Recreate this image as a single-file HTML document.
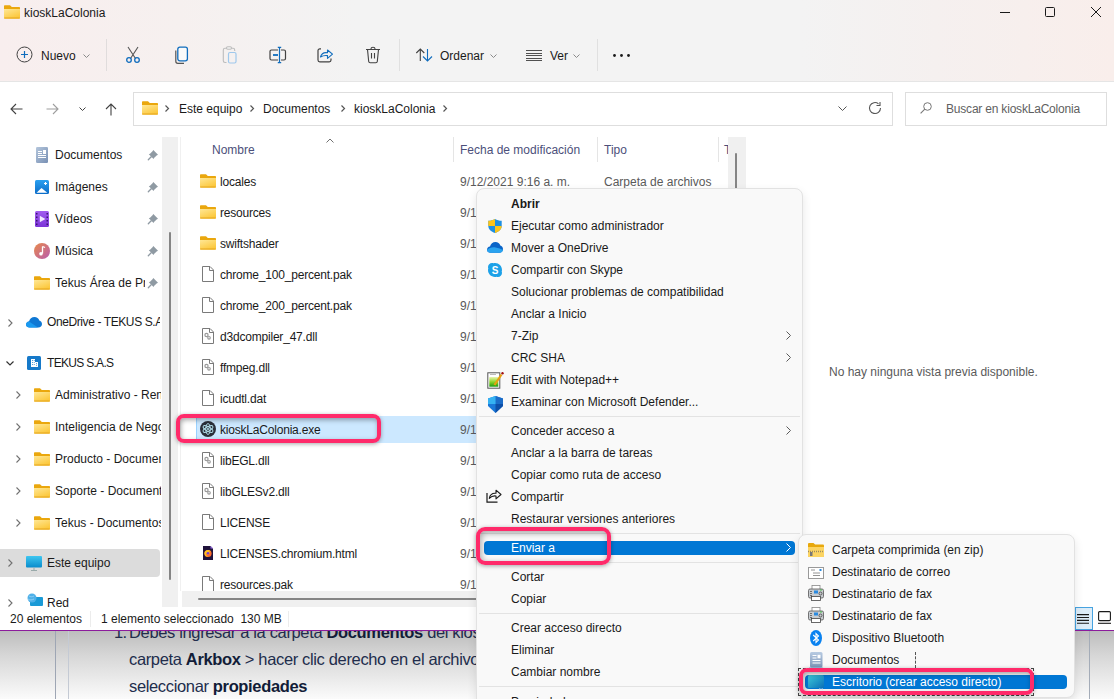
<!DOCTYPE html>
<html><head><meta charset="utf-8">
<style>
*{box-sizing:border-box;margin:0;padding:0}
html,body{width:1114px;height:699px;overflow:hidden;background:#fff;font-family:"Liberation Sans",sans-serif;font-size:12px;color:#1a1a1a}
.a{position:absolute}
.t{position:absolute;white-space:nowrap;line-height:16px;font-size:12px}
svg{position:absolute;overflow:visible}
#top{left:0;top:0;width:1114px;height:82px;background:linear-gradient(90deg,#f8eeee 0%,#f6f0ef 16%,#f3f3f3 32%,#f3f3f3 72%,#f5f0ef 84%,#f9eeeb 100%);border-bottom:1px solid #e5e5e5}
.ic{stroke:#424242;fill:none;stroke-width:1}
.bl{stroke:#0f6cbd}
</style></head><body>
<svg width="0" height="0" style="position:absolute"><defs><linearGradient id="gfold" x1="0" y1="0" x2=".6" y2="1"><stop offset="0" stop-color="#ffe795"/><stop offset="1" stop-color="#fcc83c"/></linearGradient></defs></svg>
<!-- ===== TOP ===== -->
<div id="top" class="a"></div>
<svg style="left:4px;top:5px" width="16" height="14" viewBox="0 0 16 13.5"><path d="M0 1C0 .4.4 0 1 0h5l1.8 1.8H15c.6 0 1 .4 1 1v9.4c0 .6-.4 1-1 1H1c-.6 0-1-.4-1-1z" fill="#eaa70d"/><path d="M0 3.8h16v8.4c0 .6-.4 1-1 1H1c-.6 0-1-.4-1-1z" fill="url(#gfold)"/><path d="M.3 12.7h15.4" stroke="#e3a21c" stroke-width=".8"/></svg>
<div class="t" style="left:24px;top:5px;color:#1a1a1a">kioskLaColonia</div>
<!-- window controls -->
<svg style="left:1000px;top:12px" width="10" height="1"><rect width="10" height="1" fill="#1a1a1a"/></svg>
<svg style="left:1045px;top:7px" width="10" height="10" viewBox="0 0 10 10"><rect x=".5" y=".5" width="9" height="9" rx="1" fill="none" stroke="#1a1a1a"/></svg>
<svg style="left:1091px;top:7px" width="10" height="10" viewBox="0 0 10 10"><path d="M0 0L10 10M10 0L0 10" stroke="#1a1a1a" stroke-width="1"/></svg>
<!-- toolbar -->
<svg style="left:16px;top:46px" width="17" height="17" viewBox="0 0 17 17"><circle cx="8.5" cy="8.5" r="7.5" fill="none" stroke="#424242"/><path d="M8.5 5v7M5 8.5h7" stroke="#0f6cbd" stroke-width="1.2"/></svg>
<div class="t" style="left:41px;top:48px">Nuevo</div>
<svg style="left:83px;top:54px" width="7" height="4" viewBox="0 0 7 4"><path d="M.5 .5l3 3 3-3" fill="none" stroke="#8a8a8a"/></svg>
<div class="a" style="left:106px;top:39px;width:1px;height:32px;background:#e0dcdc"></div>
<!-- cut -->
<svg style="left:125px;top:46px" width="16" height="17" viewBox="0 0 16 17"><path d="M3 1l7.5 11.5M13 1L5.5 12.5" stroke="#555" stroke-width="1.1" fill="none"/><circle cx="4" cy="14" r="2.3" fill="none" stroke="#0f6cbd" stroke-width="1.3"/><circle cx="12" cy="14" r="2.3" fill="none" stroke="#0f6cbd" stroke-width="1.3"/></svg>
<!-- copy -->
<svg style="left:174px;top:46px" width="16" height="18" viewBox="0 0 16 18"><path d="M1.8 4.5v10.8c0 1.2 1 2 2 2h6.2" fill="none" stroke="#555" stroke-width="1.2"/><rect x="3.8" y="1.2" width="9.6" height="13.6" rx="2" fill="#fafafa" stroke="#0f6cbd" stroke-width="1.3"/></svg>
<!-- paste (disabled) -->
<svg style="left:222px;top:46px" width="16" height="18" viewBox="0 0 16 18"><path d="M4.5 16.5H3c-1 0-1.7-.7-1.7-1.7V4c0-1 .7-1.7 1.7-1.7h8c1 0 1.7.7 1.7 1.7v1" fill="none" stroke="#bdbdbd" stroke-width="1.1"/><rect x="4.5" y=".8" width="5" height="2.5" rx="1.2" fill="#f3f3f3" stroke="#bdbdbd" stroke-width="1.1"/><rect x="6.5" y="6.5" width="7.5" height="10.5" rx="1.5" fill="none" stroke="#9fc8ec" stroke-width="1.2"/></svg>
<!-- rename -->
<svg style="left:269px;top:46px" width="18" height="18" viewBox="0 0 18 18"><path d="M9 4H2.5C1.6 4 1 4.6 1 5.5v7c0 .9.6 1.5 1.5 1.5H9M12 4h3c.9 0 1.5.6 1.5 1.5v7c0 .9-.6 1.5-1.5 1.5h-3" fill="none" stroke="#424242" stroke-width="1.2"/><path d="M4 9h5" stroke="#0f6cbd" stroke-width="1.8"/><path d="M10.5 1.5v15M8.8 1.3h3.4M8.8 16.7h3.4" stroke="#0f6cbd" stroke-width="1.2"/></svg>
<!-- share -->
<svg style="left:317px;top:47px" width="17" height="16" viewBox="0 0 17 16"><path d="M4 1.8H2.8C1.8 1.8 1 2.6 1 3.6v9.4c0 1 .8 1.8 1.8 1.8h9.4c1 0 1.8-.8 1.8-1.8v-1.5" fill="none" stroke="#424242" stroke-width="1.2"/><path d="M3.5 10C4.5 6.5 7 5.2 10.5 5.8V3l5 4.2-5 4.2V8.6C7.5 8.2 5.5 8.8 3.5 10z" fill="none" stroke="#0f6cbd" stroke-width="1.1" stroke-linejoin="round"/></svg>
<!-- trash -->
<svg style="left:365px;top:46px" width="16" height="18" viewBox="0 0 16 18"><path d="M1 3.5h14M6 3.5V2.8C6 2 6.8 1.3 8 1.3S10 2 10 2.8v.7M2.5 3.5l1.2 12c.1.8.7 1.3 1.5 1.3h5.6c.8 0 1.4-.5 1.5-1.3l1.2-12M6.5 7v5.5M9.5 7v5.5" fill="none" stroke="#424242" stroke-width="1.1"/></svg>
<div class="a" style="left:399px;top:39px;width:1px;height:32px;background:#e0e0e0"></div>
<!-- ordenar -->
<svg style="left:416px;top:48px" width="17" height="14" viewBox="0 0 17 14"><path d="M4.3 13V1M.3 5L4.3 1l4 4" fill="none" stroke="#424242" stroke-width="1.1"/><path d="M11.5 1v12M7 8.5l4.5 4.5 4.5-4.5" fill="none" stroke="#0f6cbd" stroke-width="1.1"/></svg>
<div class="t" style="left:440px;top:48px">Ordenar</div>
<svg style="left:490px;top:54px" width="7" height="4" viewBox="0 0 7 4"><path d="M.5 .5l3 3 3-3" fill="none" stroke="#8a8a8a"/></svg>
<svg style="left:526px;top:50px" width="16" height="11" viewBox="0 0 16 11"><path d="M0 0h16v1H0zM0 3h16v1H0zM0 5h16v1H0zM0 8h16v1H0zM0 10h16v1H0z" fill="#505050"/></svg>
<div class="t" style="left:550px;top:48px">Ver</div>
<svg style="left:573px;top:54px" width="7" height="4" viewBox="0 0 7 4"><path d="M.5 .5l3 3 3-3" fill="none" stroke="#8a8a8a"/></svg>
<div class="a" style="left:597px;top:39px;width:1px;height:32px;background:#e0e0e0"></div>
<svg style="left:613px;top:54px" width="17" height="3" viewBox="0 0 17 3"><circle cx="1.5" cy="1.5" r="1.4" fill="#1a1a1a"/><circle cx="8.5" cy="1.5" r="1.4" fill="#1a1a1a"/><circle cx="15.5" cy="1.5" r="1.4" fill="#1a1a1a"/></svg>

<!-- ===== ADDRESS ROW ===== -->
<svg style="left:10px;top:103px" width="13" height="12" viewBox="0 0 13 12"><path d="M12.5 6H1M6 1L1 6l5 5" fill="none" stroke="#424242" stroke-width="1.1"/></svg>
<svg style="left:46px;top:103px" width="13" height="12" viewBox="0 0 13 12"><path d="M.5 6H12M7 1l5 5-5 5" fill="none" stroke="#9e9e9e" stroke-width="1.1"/></svg>
<svg style="left:79px;top:107px" width="7" height="4" viewBox="0 0 7 4"><path d="M.5 .5l3 3 3-3" fill="none" stroke="#424242"/></svg>
<svg style="left:105px;top:103px" width="12" height="13" viewBox="0 0 12 13"><path d="M6 12.5V1M1 6l5-5 5 5" fill="none" stroke="#424242" stroke-width="1.1"/></svg>
<div class="a" style="left:133px;top:92px;width:760px;height:34px;border:1px solid #dedede;background:#fff"></div>
<svg style="left:142px;top:101px" width="16" height="14" viewBox="0 0 16 13.5"><path d="M0 1C0 .4.4 0 1 0h5l1.8 1.8H15c.6 0 1 .4 1 1v9.4c0 .6-.4 1-1 1H1c-.6 0-1-.4-1-1z" fill="#eaa70d"/><path d="M0 3.8h16v8.4c0 .6-.4 1-1 1H1c-.6 0-1-.4-1-1z" fill="url(#gfold)"/><path d="M.3 12.7h15.4" stroke="#e3a21c" stroke-width=".8"/></svg>
<svg style="left:165px;top:105px" width="4" height="7" viewBox="0 0 4 7"><path d="M.5.5l3 3-3 3" fill="none" stroke="#555" stroke-width="1.2"/></svg>
<div class="t" style="left:179px;top:101px">Este equipo</div>
<svg style="left:250px;top:105px" width="4" height="7" viewBox="0 0 4 7"><path d="M.5.5l3 3-3 3" fill="none" stroke="#555" stroke-width="1.2"/></svg>
<div class="t" style="left:263px;top:101px">Documentos</div>
<svg style="left:341px;top:105px" width="4" height="7" viewBox="0 0 4 7"><path d="M.5.5l3 3-3 3" fill="none" stroke="#555" stroke-width="1.2"/></svg>
<div class="t" style="left:354px;top:101px">kioskLaColonia</div>
<svg style="left:443px;top:105px" width="4" height="7" viewBox="0 0 4 7"><path d="M.5.5l3 3-3 3" fill="none" stroke="#555" stroke-width="1.2"/></svg>
<svg style="left:838px;top:106px" width="9" height="5" viewBox="0 0 9 5"><path d="M.5.5l4 4 4-4" fill="none" stroke="#555"/></svg>
<svg style="left:868px;top:101px" width="14" height="14" viewBox="0 0 14 14"><path d="M12.5 7A5.5 5.5 0 1 1 10.5 2.8M12 1v3.5H8.5" fill="none" stroke="#555" stroke-width="1.1"/></svg>
<div class="a" style="left:905px;top:92px;width:202px;height:34px;border:1px solid #dedede;background:#fff"></div>
<svg style="left:920px;top:102px" width="12" height="12" viewBox="0 0 12 12"><circle cx="7.5" cy="4.5" r="3.8" fill="none" stroke="#777"/><path d="M4.8 7.2L.6 11.4" stroke="#777" stroke-width="1.1"/></svg>
<div class="t" style="left:946px;top:101px;color:#5f5f5f;letter-spacing:-0.2px">Buscar en kioskLaColonia</div>
<!-- ===== NAV PANE ===== -->
<div class="a" style="left:162px;top:137px;width:16px;height:470px;background:#f0f0f0"></div><div class="a" style="left:180px;top:137px;width:1px;height:470px;background:#f0f0f0"></div>
<div class="a" style="left:169px;top:232px;width:2px;height:348px;background:#858585;border-radius:1px"></div>
<!-- pinned -->
<svg style="left:36px;top:147px" width="12" height="16" viewBox="0 0 12 16"><defs><linearGradient id="gd" x1="0" y1="0" x2="1" y2="1"><stop offset="0" stop-color="#b4c6dc"/><stop offset="1" stop-color="#7890b4"/></linearGradient></defs><rect width="12" height="16" rx="1.2" fill="url(#gd)"/><path d="M2 4h4v1H2zM2 6h4v1H2zM2 8h8v1H2zM2 10h8v1H2z" fill="#fff"/><rect x="7" y="3" width="3" height="4" fill="#fff"/></svg>
<div class="t" style="left:55px;top:147px">Documentos</div>
<svg style="left:35px;top:180px" width="14" height="14" viewBox="0 0 14 14"><defs><linearGradient id="gim" x1="0" y1="0" x2="0" y2="1"><stop offset="0" stop-color="#2aa0f0"/><stop offset="1" stop-color="#0b6cc8"/></linearGradient></defs><rect width="14" height="14" rx="1.5" fill="url(#gim)"/><path d="M1.5 12.8L6.5 8l5.8 4.8z" fill="#fff"/><path d="M10.5 2v3M9 3.5h3" stroke="#fff" stroke-width="1.1"/></svg>
<div class="t" style="left:55px;top:179px">Imágenes</div>
<svg style="left:35px;top:211px" width="14" height="16" viewBox="0 0 14 16"><defs><linearGradient id="gvd" x1="0" y1="0" x2="0" y2="1"><stop offset="0" stop-color="#a25cf0"/><stop offset="1" stop-color="#7c34d8"/></linearGradient></defs><rect width="14" height="16" rx="1.5" fill="url(#gvd)"/><path d="M4.8 4.8v6.4l5.6-3.2z" fill="#f0e8ff"/><path d="M1 2h1.5v1.5H1zM1 5.5h1.5V7H1zM1 9h1.5v1.5H1zM1 12.5h1.5V14H1zM11.5 2H13v1.5h-1.5zM11.5 5.5H13V7h-1.5zM11.5 9H13v1.5h-1.5zM11.5 12.5H13V14h-1.5z" fill="#3a1470"/></svg>
<div class="t" style="left:55px;top:211px">Vídeos</div>
<svg style="left:34px;top:243px" width="16" height="16" viewBox="0 0 16 16"><defs><linearGradient id="gm" x1="0" y1="0" x2="1" y2="1"><stop offset="0" stop-color="#e88a4a"/><stop offset="1" stop-color="#b85cb0"/></linearGradient></defs><circle cx="8" cy="8" r="8" fill="url(#gm)"/><path d="M8.5 3.5v7" stroke="#fff" stroke-width="1.3"/><circle cx="7" cy="10.8" r="1.8" fill="#fff"/><path d="M8.5 3.5l2.5 1" stroke="#fff" stroke-width="1.2"/></svg>
<div class="t" style="left:55px;top:243px">Música</div>
<svg style="left:34px;top:276px" width="16" height="14" viewBox="0 0 16 13.5"><path d="M0 1C0 .4.4 0 1 0h5l1.8 1.8H15c.6 0 1 .4 1 1v9.4c0 .6-.4 1-1 1H1c-.6 0-1-.4-1-1z" fill="#eaa70d"/><path d="M0 3.8h16v8.4c0 .6-.4 1-1 1H1c-.6 0-1-.4-1-1z" fill="url(#gfold)"/><path d="M.3 12.7h15.4" stroke="#e3a21c" stroke-width=".8"/></svg>
<div class="a" style="left:55px;top:275px;width:90px;height:16px;overflow:hidden"><div class="t" style="left:0;top:0">Tekus Área de Producto</div></div>
<!-- pins -->
<svg style="left:148px;top:150px" width="10" height="10" viewBox="0 0 10 10"><path d="M5.3 0L10 4.7 8.6 5.4 6 8l-.4 1L.8 4.3 2 3.7 4.5 1.3z" fill="#8f9aa3"/><path d="M3.2 6.8L.3 9.7" stroke="#8f9aa3" stroke-width="1.3" stroke-linecap="round"/></svg>
<svg style="left:148px;top:182px" width="10" height="10" viewBox="0 0 10 10"><path d="M5.3 0L10 4.7 8.6 5.4 6 8l-.4 1L.8 4.3 2 3.7 4.5 1.3z" fill="#8f9aa3"/><path d="M3.2 6.8L.3 9.7" stroke="#8f9aa3" stroke-width="1.3" stroke-linecap="round"/></svg>
<svg style="left:148px;top:214px" width="10" height="10" viewBox="0 0 10 10"><path d="M5.3 0L10 4.7 8.6 5.4 6 8l-.4 1L.8 4.3 2 3.7 4.5 1.3z" fill="#8f9aa3"/><path d="M3.2 6.8L.3 9.7" stroke="#8f9aa3" stroke-width="1.3" stroke-linecap="round"/></svg>
<svg style="left:148px;top:246px" width="10" height="10" viewBox="0 0 10 10"><path d="M5.3 0L10 4.7 8.6 5.4 6 8l-.4 1L.8 4.3 2 3.7 4.5 1.3z" fill="#8f9aa3"/><path d="M3.2 6.8L.3 9.7" stroke="#8f9aa3" stroke-width="1.3" stroke-linecap="round"/></svg>
<svg style="left:148px;top:278px" width="10" height="10" viewBox="0 0 10 10"><path d="M5.3 0L10 4.7 8.6 5.4 6 8l-.4 1L.8 4.3 2 3.7 4.5 1.3z" fill="#8f9aa3"/><path d="M3.2 6.8L.3 9.7" stroke="#8f9aa3" stroke-width="1.3" stroke-linecap="round"/></svg>
<!-- OneDrive -->
<svg style="left:8px;top:319px" width="5" height="8" viewBox="0 0 5 8"><path d="M.5.5L4 4 .5 7.5" fill="none" stroke="#707070" stroke-width="1.1"/></svg>
<svg style="left:26px;top:317px" width="16" height="11" viewBox="0 0 16 11"><path d="M3.5 10.5C1.6 10.5 0 9.2 0 7.5c0-1.6 1.3-2.8 3-3C3.5 2 5.8 0 8.5 0c2.3 0 4.2 1.4 4.8 3.5 1.5.3 2.7 1.6 2.7 3.4 0 2-1.6 3.6-3.6 3.6z" fill="#0f78d4"/><path d="M3.5 10.5C1.6 10.5 0 9.2 0 7.5c0-1.6 1.3-2.8 3-3L12 10.5z" fill="#1a9af0"/></svg>
<div class="a" style="left:47px;top:314px;width:113px;height:16px;overflow:hidden"><div class="t" style="left:0;top:0;letter-spacing:-0.4px">OneDrive - TEKUS S.A.S</div></div>
<!-- TEKUS -->
<svg style="left:6px;top:361px" width="8" height="5" viewBox="0 0 8 5"><path d="M.5.5L4 4 7.5.5" fill="none" stroke="#333" stroke-width="1.2"/></svg>
<svg style="left:27px;top:356px" width="14" height="14" viewBox="0 0 14 14"><rect width="14" height="14" rx="1.5" fill="#1679c9"/><path d="M4 3h4v8H4zM8 6h3v5H8z" fill="#fff"/><path d="M5 4.5h.8M6.8 4.5h.8M5 6.5h.8M6.8 6.5h.8M5 8.5h.8M6.8 8.5h.8M9 7.5h.8M9 9.3h.8" stroke="#1679c9" stroke-width=".9"/></svg>
<div class="t" style="left:47px;top:355px;letter-spacing:-0.7px">TEKUS S.A.S</div>
<svg style="left:16px;top:391px" width="5" height="8" viewBox="0 0 5 8"><path d="M.5.5L4 4 .5 7.5" fill="none" stroke="#707070" stroke-width="1.1"/></svg>
<svg style="left:34px;top:388px" width="16" height="14" viewBox="0 0 16 13.5"><path d="M0 1C0 .4.4 0 1 0h5l1.8 1.8H15c.6 0 1 .4 1 1v9.4c0 .6-.4 1-1 1H1c-.6 0-1-.4-1-1z" fill="#eaa70d"/><path d="M0 3.8h16v8.4c0 .6-.4 1-1 1H1c-.6 0-1-.4-1-1z" fill="url(#gfold)"/><path d="M.3 12.7h15.4" stroke="#e3a21c" stroke-width=".8"/></svg>
<div class="a" style="left:55px;top:387px;width:106px;height:16px;overflow:hidden"><div class="t" style="left:0;top:0">Administrativo - Rendición</div></div>
<svg style="left:16px;top:423px" width="5" height="8" viewBox="0 0 5 8"><path d="M.5.5L4 4 .5 7.5" fill="none" stroke="#707070" stroke-width="1.1"/></svg>
<svg style="left:34px;top:420px" width="16" height="14" viewBox="0 0 16 13.5"><path d="M0 1C0 .4.4 0 1 0h5l1.8 1.8H15c.6 0 1 .4 1 1v9.4c0 .6-.4 1-1 1H1c-.6 0-1-.4-1-1z" fill="#eaa70d"/><path d="M0 3.8h16v8.4c0 .6-.4 1-1 1H1c-.6 0-1-.4-1-1z" fill="url(#gfold)"/><path d="M.3 12.7h15.4" stroke="#e3a21c" stroke-width=".8"/></svg>
<div class="a" style="left:55px;top:419px;width:106px;height:16px;overflow:hidden"><div class="t" style="left:0;top:0">Inteligencia de Negocios</div></div>
<svg style="left:16px;top:455px" width="5" height="8" viewBox="0 0 5 8"><path d="M.5.5L4 4 .5 7.5" fill="none" stroke="#707070" stroke-width="1.1"/></svg>
<svg style="left:34px;top:452px" width="16" height="14" viewBox="0 0 16 13.5"><path d="M0 1C0 .4.4 0 1 0h5l1.8 1.8H15c.6 0 1 .4 1 1v9.4c0 .6-.4 1-1 1H1c-.6 0-1-.4-1-1z" fill="#eaa70d"/><path d="M0 3.8h16v8.4c0 .6-.4 1-1 1H1c-.6 0-1-.4-1-1z" fill="url(#gfold)"/><path d="M.3 12.7h15.4" stroke="#e3a21c" stroke-width=".8"/></svg>
<div class="a" style="left:55px;top:451px;width:106px;height:16px;overflow:hidden"><div class="t" style="left:0;top:0">Producto - Documentos</div></div>
<svg style="left:16px;top:487px" width="5" height="8" viewBox="0 0 5 8"><path d="M.5.5L4 4 .5 7.5" fill="none" stroke="#707070" stroke-width="1.1"/></svg>
<svg style="left:34px;top:484px" width="16" height="14" viewBox="0 0 16 13.5"><path d="M0 1C0 .4.4 0 1 0h5l1.8 1.8H15c.6 0 1 .4 1 1v9.4c0 .6-.4 1-1 1H1c-.6 0-1-.4-1-1z" fill="#eaa70d"/><path d="M0 3.8h16v8.4c0 .6-.4 1-1 1H1c-.6 0-1-.4-1-1z" fill="url(#gfold)"/><path d="M.3 12.7h15.4" stroke="#e3a21c" stroke-width=".8"/></svg>
<div class="a" style="left:55px;top:483px;width:106px;height:16px;overflow:hidden"><div class="t" style="left:0;top:0">Soporte - Documentos</div></div>
<svg style="left:16px;top:519px" width="5" height="8" viewBox="0 0 5 8"><path d="M.5.5L4 4 .5 7.5" fill="none" stroke="#707070" stroke-width="1.1"/></svg>
<svg style="left:34px;top:516px" width="16" height="14" viewBox="0 0 16 13.5"><path d="M0 1C0 .4.4 0 1 0h5l1.8 1.8H15c.6 0 1 .4 1 1v9.4c0 .6-.4 1-1 1H1c-.6 0-1-.4-1-1z" fill="#eaa70d"/><path d="M0 3.8h16v8.4c0 .6-.4 1-1 1H1c-.6 0-1-.4-1-1z" fill="url(#gfold)"/><path d="M.3 12.7h15.4" stroke="#e3a21c" stroke-width=".8"/></svg>
<div class="a" style="left:55px;top:515px;width:106px;height:16px;overflow:hidden"><div class="t" style="left:0;top:0">Tekus - Documentos</div></div>
<!-- Este equipo -->
<div class="a" style="left:0;top:549px;width:160px;height:28px;background:#dcdcdc;border-radius:0 4px 4px 0"></div>
<svg style="left:8px;top:559px" width="5" height="8" viewBox="0 0 5 8"><path d="M.5.5L4 4 .5 7.5" fill="none" stroke="#707070" stroke-width="1.1"/></svg>
<svg style="left:26px;top:556px" width="16" height="15" viewBox="0 0 16 15"><defs><linearGradient id="gp" x1="0" y1="0" x2="0" y2="1"><stop offset="0" stop-color="#3ec6f0"/><stop offset="1" stop-color="#0a8ccc"/></linearGradient></defs><rect x="0" y="0" width="16" height="11.5" rx="1" fill="url(#gp)"/><path d="M8 11.5v2.5M5 14.5h6" stroke="#9aa" stroke-width="1"/></svg>
<div class="t" style="left:47px;top:555px">Este equipo</div>
<!-- Red -->
<svg style="left:8px;top:599px" width="5" height="8" viewBox="0 0 5 8"><path d="M.5.5L4 4 .5 7.5" fill="none" stroke="#707070" stroke-width="1.1"/></svg>
<svg style="left:27px;top:593px" width="16" height="14" viewBox="0 0 16 14"><rect x="3" y="4" width="13" height="9" rx="1" fill="#1a9ad6"/><circle cx="5" cy="5" r="4.5" fill="#4fb0e8"/><path d="M2 3c1.5 1 3 1 5 0M1 6c2 1.5 4 1 6 0" stroke="#9dd5f5" stroke-width=".8" fill="none"/></svg>
<div class="t" style="left:47px;top:595px">Red</div>
<!-- ===== FILE LIST ===== -->
<div class="a" style="left:176px;top:137px;width:569px;height:470px;overflow:hidden">
<div class="t" style="left:36px;top:5px;color:#4c4f7a">Nombre</div>
<svg style="left:150px;top:1px" width="8" height="5" viewBox="0 0 8 5"><path d="M.5 4.5L4 1l3.5 3.5" fill="none" stroke="#707070" stroke-width="1"/></svg>
<div class="a" style="left:277px;top:0;width:1px;height:25px;background:#e5e5e5"></div>
<div class="t" style="left:284px;top:5px;color:#4c4f7a">Fecha de modificación</div>
<div class="a" style="left:421px;top:0;width:1px;height:25px;background:#e5e5e5"></div>
<div class="t" style="left:428px;top:5px;color:#4c4f7a">Tipo</div>
<div class="a" style="left:542px;top:0;width:1px;height:25px;background:#e5e5e5"></div>
<div class="t" style="left:548px;top:5px;color:#4c4f7a">Tamaño</div>
<div class="a" style="left:20px;top:279px;width:560px;height:27px;background:#cce8ff;border-left:1px solid #99d1ff"></div>
<svg style="left:24px;top:37px" width="16" height="14" viewBox="0 0 16 13.5"><path d="M0 1C0 .4.4 0 1 0h5l1.8 1.8H15c.6 0 1 .4 1 1v9.4c0 .6-.4 1-1 1H1c-.6 0-1-.4-1-1z" fill="#eaa70d"/><path d="M0 3.8h16v8.4c0 .6-.4 1-1 1H1c-.6 0-1-.4-1-1z" fill="url(#gfold)"/><path d="M.3 12.7h15.4" stroke="#e3a21c" stroke-width=".8"/></svg>
<div class="t" style="left:44px;top:36.6px;color:#1a1a1a;letter-spacing:-0.2px">locales</div>
<div class="t" style="left:284px;top:36.6px;color:#5a5a5a">9/12/2021 9:16 a. m.</div>
<div class="t" style="left:428px;top:36.6px;color:#5a5a5a">Carpeta de archivos</div>
<svg style="left:24px;top:68px" width="16" height="14" viewBox="0 0 16 13.5"><path d="M0 1C0 .4.4 0 1 0h5l1.8 1.8H15c.6 0 1 .4 1 1v9.4c0 .6-.4 1-1 1H1c-.6 0-1-.4-1-1z" fill="#eaa70d"/><path d="M0 3.8h16v8.4c0 .6-.4 1-1 1H1c-.6 0-1-.4-1-1z" fill="url(#gfold)"/><path d="M.3 12.7h15.4" stroke="#e3a21c" stroke-width=".8"/></svg>
<div class="t" style="left:44px;top:67.6px;color:#1a1a1a;letter-spacing:-0.2px">resources</div>
<div class="t" style="left:284px;top:67.6px;color:#5a5a5a">9/12/2021 9:16 a. m.</div>
<div class="t" style="left:428px;top:67.6px;color:#5a5a5a">Carpeta de archivos</div>
<svg style="left:24px;top:99px" width="16" height="14" viewBox="0 0 16 13.5"><path d="M0 1C0 .4.4 0 1 0h5l1.8 1.8H15c.6 0 1 .4 1 1v9.4c0 .6-.4 1-1 1H1c-.6 0-1-.4-1-1z" fill="#eaa70d"/><path d="M0 3.8h16v8.4c0 .6-.4 1-1 1H1c-.6 0-1-.4-1-1z" fill="url(#gfold)"/><path d="M.3 12.7h15.4" stroke="#e3a21c" stroke-width=".8"/></svg>
<div class="t" style="left:44px;top:98.6px;color:#1a1a1a;letter-spacing:-0.2px">swiftshader</div>
<div class="t" style="left:284px;top:98.6px;color:#5a5a5a">9/12/2021 9:16 a. m.</div>
<div class="t" style="left:428px;top:98.6px;color:#5a5a5a">Carpeta de archivos</div>
<svg style="left:26px;top:129px" width="12" height="16" viewBox="0 0 12 16"><path d="M.5.5h7.5l3.5 3.5v11.5H.5z" fill="#fff" stroke="#7a7a7a"/><path d="M7.5.5v4h4" fill="none" stroke="#7a7a7a"/></svg>
<div class="t" style="left:44px;top:129.6px;color:#1a1a1a;letter-spacing:-0.2px">chrome_100_percent.pak</div>
<div class="t" style="left:284px;top:129.6px;color:#5a5a5a">9/12/2021 9:16 a. m.</div>
<div class="t" style="left:428px;top:129.6px;color:#5a5a5a">Archivo</div>
<svg style="left:26px;top:160px" width="12" height="16" viewBox="0 0 12 16"><path d="M.5.5h7.5l3.5 3.5v11.5H.5z" fill="#fff" stroke="#7a7a7a"/><path d="M7.5.5v4h4" fill="none" stroke="#7a7a7a"/></svg>
<div class="t" style="left:44px;top:160.6px;color:#1a1a1a;letter-spacing:-0.2px">chrome_200_percent.pak</div>
<div class="t" style="left:284px;top:160.6px;color:#5a5a5a">9/12/2021 9:16 a. m.</div>
<div class="t" style="left:428px;top:160.6px;color:#5a5a5a">Archivo</div>
<svg style="left:26px;top:191px" width="12" height="16" viewBox="0 0 12 16"><path d="M.5.5h7.5l3.5 3.5v11.5H.5z" fill="#fff" stroke="#7a7a7a"/><path d="M7.5.5v4h4" fill="none" stroke="#7a7a7a"/><circle cx="4.5" cy="7" r="1.6" fill="none" stroke="#9a9a9a" stroke-width="1.2"/><circle cx="7" cy="9.8" r="1.3" fill="none" stroke="#9a9a9a" stroke-width="1.1"/></svg>
<div class="t" style="left:44px;top:191.6px;color:#1a1a1a;letter-spacing:-0.2px">d3dcompiler_47.dll</div>
<div class="t" style="left:284px;top:191.6px;color:#5a5a5a">9/12/2021 9:16 a. m.</div>
<div class="t" style="left:428px;top:191.6px;color:#5a5a5a">Archivo</div>
<svg style="left:26px;top:222px" width="12" height="16" viewBox="0 0 12 16"><path d="M.5.5h7.5l3.5 3.5v11.5H.5z" fill="#fff" stroke="#7a7a7a"/><path d="M7.5.5v4h4" fill="none" stroke="#7a7a7a"/><circle cx="4.5" cy="7" r="1.6" fill="none" stroke="#9a9a9a" stroke-width="1.2"/><circle cx="7" cy="9.8" r="1.3" fill="none" stroke="#9a9a9a" stroke-width="1.1"/></svg>
<div class="t" style="left:44px;top:222.6px;color:#1a1a1a;letter-spacing:-0.2px">ffmpeg.dll</div>
<div class="t" style="left:284px;top:222.6px;color:#5a5a5a">9/12/2021 9:16 a. m.</div>
<div class="t" style="left:428px;top:222.6px;color:#5a5a5a">Archivo</div>
<svg style="left:26px;top:253px" width="12" height="16" viewBox="0 0 12 16"><path d="M.5.5h7.5l3.5 3.5v11.5H.5z" fill="#fff" stroke="#7a7a7a"/><path d="M7.5.5v4h4" fill="none" stroke="#7a7a7a"/></svg>
<div class="t" style="left:44px;top:253.6px;color:#1a1a1a;letter-spacing:-0.2px">icudtl.dat</div>
<div class="t" style="left:284px;top:253.6px;color:#5a5a5a">9/12/2021 9:16 a. m.</div>
<div class="t" style="left:428px;top:253.6px;color:#5a5a5a">Archivo</div>
<svg style="left:24px;top:284px" width="16" height="16" viewBox="0 0 16 16"><circle cx="8" cy="8" r="8" fill="#2b2f3a"/><g fill="none" stroke="#b5e3ef" stroke-width=".9"><ellipse cx="8" cy="8" rx="5.5" ry="2.2" transform="rotate(30 8 8)"/><ellipse cx="8" cy="8" rx="5.5" ry="2.2" transform="rotate(-30 8 8)"/><ellipse cx="8" cy="8" rx="5.5" ry="2.2" transform="rotate(90 8 8)"/></g><circle cx="8" cy="8" r="1" fill="#b5e3ef"/></svg>
<div class="t" style="left:44px;top:284.6px;color:#1a1a1a;letter-spacing:-0.2px">kioskLaColonia.exe</div>
<div class="t" style="left:284px;top:284.6px;color:#5a5a5a">9/12/2021 9:16 a. m.</div>
<div class="t" style="left:428px;top:284.6px;color:#5a5a5a">Archivo</div>
<svg style="left:26px;top:315px" width="12" height="16" viewBox="0 0 12 16"><path d="M.5.5h7.5l3.5 3.5v11.5H.5z" fill="#fff" stroke="#7a7a7a"/><path d="M7.5.5v4h4" fill="none" stroke="#7a7a7a"/><circle cx="4.5" cy="7" r="1.6" fill="none" stroke="#9a9a9a" stroke-width="1.2"/><circle cx="7" cy="9.8" r="1.3" fill="none" stroke="#9a9a9a" stroke-width="1.1"/></svg>
<div class="t" style="left:44px;top:315.6px;color:#1a1a1a;letter-spacing:-0.2px">libEGL.dll</div>
<div class="t" style="left:284px;top:315.6px;color:#5a5a5a">9/12/2021 9:16 a. m.</div>
<div class="t" style="left:428px;top:315.6px;color:#5a5a5a">Archivo</div>
<svg style="left:26px;top:346px" width="12" height="16" viewBox="0 0 12 16"><path d="M.5.5h7.5l3.5 3.5v11.5H.5z" fill="#fff" stroke="#7a7a7a"/><path d="M7.5.5v4h4" fill="none" stroke="#7a7a7a"/><circle cx="4.5" cy="7" r="1.6" fill="none" stroke="#9a9a9a" stroke-width="1.2"/><circle cx="7" cy="9.8" r="1.3" fill="none" stroke="#9a9a9a" stroke-width="1.1"/></svg>
<div class="t" style="left:44px;top:346.6px;color:#1a1a1a;letter-spacing:-0.2px">libGLESv2.dll</div>
<div class="t" style="left:284px;top:346.6px;color:#5a5a5a">9/12/2021 9:16 a. m.</div>
<div class="t" style="left:428px;top:346.6px;color:#5a5a5a">Archivo</div>
<svg style="left:26px;top:377px" width="12" height="16" viewBox="0 0 12 16"><path d="M.5.5h7.5l3.5 3.5v11.5H.5z" fill="#fff" stroke="#7a7a7a"/><path d="M7.5.5v4h4" fill="none" stroke="#7a7a7a"/></svg>
<div class="t" style="left:44px;top:377.6px;color:#1a1a1a;letter-spacing:-0.2px">LICENSE</div>
<div class="t" style="left:284px;top:377.6px;color:#5a5a5a">9/12/2021 9:16 a. m.</div>
<div class="t" style="left:428px;top:377.6px;color:#5a5a5a">Archivo</div>
<svg style="left:27px;top:409px" width="10" height="14" viewBox="0 0 10 14"><path d="M0 0h7.5L10 2.5V14H0z" fill="#20123a"/><path d="M7.5 0v2.5H10z" fill="#9a6ef0"/><circle cx="5" cy="7.5" r="3.6" fill="#ff6a2a"/><path d="M5 3.9a3.6 3.6 0 0 1 3.4 2.4C7.8 5.3 6.8 5 6 5.3 7 6 7 7.5 6 8.3S3.5 8.6 3.2 7.5C2.8 9 3.8 10.5 5.5 10.6A3.6 3.6 0 0 1 1.4 7.5 3.6 3.6 0 0 1 5 3.9z" fill="#ffc020"/><circle cx="5" cy="7.3" r="1.3" fill="#7a3ad0"/></svg>
<div class="t" style="left:44px;top:408.6px;color:#1a1a1a;letter-spacing:-0.2px">LICENSES.chromium.html</div>
<div class="t" style="left:284px;top:408.6px;color:#5a5a5a">9/12/2021 9:16 a. m.</div>
<div class="t" style="left:428px;top:408.6px;color:#5a5a5a">Archivo</div>
<svg style="left:26px;top:439px" width="12" height="16" viewBox="0 0 12 16"><path d="M.5.5h7.5l3.5 3.5v11.5H.5z" fill="#fff" stroke="#7a7a7a"/><path d="M7.5.5v4h4" fill="none" stroke="#7a7a7a"/></svg>
<div class="t" style="left:44px;top:439.6px;color:#1a1a1a;letter-spacing:-0.2px">resources.pak</div>
<div class="t" style="left:284px;top:439.6px;color:#5a5a5a">9/12/2021 9:16 a. m.</div>
<div class="t" style="left:428px;top:439.6px;color:#5a5a5a">Archivo</div>
<div class="a" style="left:552px;top:0;width:17px;height:454px;background:#f0f0f0"></div>
<div class="a" style="left:559px;top:16px;width:2px;height:430px;background:#858585;border-radius:1px"></div>
<div class="a" style="left:2px;top:454px;width:4px;height:16px;background:#fff"></div><div class="a" style="left:6px;top:454px;width:563px;height:16px;background:#f0f0f0"></div>
<div class="a" style="left:22px;top:461px;width:520px;height:2px;background:#858585;border-radius:1px"></div>
</div>
<div class="t" style="left:829px;top:364px;color:#5a5a5a">No hay ninguna vista previa disponible.</div>
<div class="a" style="left:745px;top:137px;width:1px;height:470px;background:#f0f0f0"></div>
<!-- ===== STATUS BAR ===== -->
<div class="a" style="left:0;top:607px;width:1114px;height:24px;background:#fff"></div>
<div class="t" style="left:10px;top:611px;color:#1a1a1a">20 elementos</div>
<div class="a" style="left:90px;top:611px;width:1px;height:16px;background:#ececec"></div>
<div class="t" style="left:101px;top:611px;color:#1a1a1a">1 elemento seleccionado&nbsp; 130 MB</div>
<div class="a" style="left:288px;top:611px;width:1px;height:16px;background:#ececec"></div>
<div class="a" style="left:1075px;top:607px;width:18px;height:23px;background:#dcecf8;border:1px solid #47a3e0"></div>
<svg style="left:1077px;top:614px" width="12" height="10" viewBox="0 0 12 10"><path d="M0 .6h12M0 3.5h12M0 6.4h12M0 9.3h12" stroke="#1a1a1a" stroke-width="1.1"/></svg>
<svg style="left:1098px;top:611px" width="13" height="13" viewBox="0 0 13 13"><rect x=".6" y=".6" width="11.8" height="9" rx="1" fill="none" stroke="#1a1a1a" stroke-width="1.1"/><path d="M0 12.3h13" stroke="#1a1a1a" stroke-width="1.1"/></svg>
<!-- ===== DOCUMENT BELOW ===== -->
<div class="a" style="left:0;top:631px;width:1114px;height:68px;background:linear-gradient(180deg,#bdbdbd 0%,#d6d6d6 35%,#fbfbfb 100%)"></div>
<div class="a" style="left:55px;top:631px;width:1px;height:68px;background:#9ea6b4"></div>
<div class="a" style="left:68px;top:631px;width:1px;height:68px;background:#c4cad4"></div><div class="a" style="left:1089px;top:631px;width:1px;height:68px;background:#a4acb8"></div>
<div class="a" id="doc" style="left:0;top:630px;width:1114px;height:69px;overflow:hidden;font-size:16.5px;letter-spacing:-0.35px;color:#222d4c">
<div class="a" style="left:114px;top:-8px;white-space:nowrap;line-height:20px;letter-spacing:-0.8px">1.</div>
<div class="a" style="left:129px;top:-8px;white-space:nowrap;line-height:20px">Debes ingresar a la carpeta <b style="color:#121d38">Documentos</b> del kiosco</div>
<div class="a" style="left:129px;top:19px;white-space:nowrap;line-height:20px">carpeta <b style="color:#121d38">Arkbox</b> &gt; hacer clic derecho en el archivo</div>
<div class="a" style="left:129px;top:46px;white-space:nowrap;line-height:20px">seleccionar <b style="color:#121d38">propiedades</b></div>
</div>
<div class="a" style="left:0;top:630px;width:1114px;height:1px;background:#8c1c9c"></div>
<!-- ===== CONTEXT MENU ===== -->
<div class="a" style="left:476px;top:188px;width:327px;height:540px;background:#f9f9f9;border:1px solid #e2e2e2;border-radius:8px;box-shadow:0 4px 10px rgba(0,0,0,.10)"></div>
<div class="t" style="left:511px;top:195.8px;color:#1a1a1a; font-weight:700;">Abrir</div>
<div class="t" style="left:511px;top:217.6px;color:#1a1a1a;">Ejecutar como administrador</div>
<svg style="left:488px;top:219px" width="14" height="14" viewBox="0 0 14 14"><path d="M7 0C5 1.2 2.8 1.8.3 1.8v5C.3 10.3 3 12.8 7 14c4-1.2 6.7-3.7 6.7-7.2v-5C11.2 1.8 9 1.2 7 0z" fill="#1e8fe0"/><path d="M7 0C5 1.2 2.8 1.8.3 1.8V7H7zM7 7v7c4-1.2 6.7-3.7 6.7-7z" fill="#fcc419"/></svg>
<div class="t" style="left:511px;top:239.6px;color:#1a1a1a;">Mover a OneDrive</div>
<svg style="left:487px;top:242px" width="16" height="11" viewBox="0 0 16 11"><path d="M3.5 10.8C1.6 10.8 0 9.4 0 7.7c0-1.6 1.3-2.9 3-3.1C3.6 2 5.8 0 8.5 0c2.3 0 4.2 1.4 4.8 3.5 1.5.3 2.7 1.6 2.7 3.5 0 2.1-1.6 3.8-3.6 3.8z" fill="#0a64c8"/><path d="M3.5 10.8C1.6 10.8 0 9.4 0 7.7 2 6 5 5 8.5 5.5c3 .5 5.5 1.5 7.5 2.5 0 1.6-1.6 2.8-3.6 2.8z" fill="#2aa3ef"/></svg>
<div class="t" style="left:511px;top:261.6px;color:#1a1a1a;">Compartir con Skype</div>
<svg style="left:488px;top:263px" width="14" height="14" viewBox="0 0 14 14"><path d="M4 0C1.8 0 0 1.8 0 4c0 .6.1 1.1.3 1.6C.1 6.1 0 6.6 0 7.1 0 10.9 3.1 14 6.9 14c.5 0 1-.1 1.5-.2.5.2 1 .3 1.6.3 2.2 0 4-1.8 4-4 0-.6-.1-1.1-.3-1.6.2-.5.3-1 .3-1.5C14 3.1 10.9 0 7.1 0c-.5 0-1 .1-1.5.2C5.1.1 4.6 0 4 0z" fill="#1da1e8"/><text x="7" y="10.8" font-family="Liberation Sans" font-weight="700" font-size="10" fill="#fff" text-anchor="middle">S</text></svg>
<div class="t" style="left:511px;top:283.6px;color:#1a1a1a;">Solucionar problemas de compatibilidad</div>
<div class="t" style="left:511px;top:305.6px;color:#1a1a1a;">Anclar a Inicio</div>
<div class="t" style="left:511px;top:327.6px;color:#1a1a1a;">7-Zip</div>
<svg style="left:786px;top:331px" width="5" height="9" viewBox="0 0 5 9"><path d="M.5.5l4 4-4 4" fill="none" stroke="#5a5a5a" stroke-width="1"/></svg>
<div class="t" style="left:511px;top:349.6px;color:#1a1a1a;">CRC SHA</div>
<svg style="left:786px;top:353px" width="5" height="9" viewBox="0 0 5 9"><path d="M.5.5l4 4-4 4" fill="none" stroke="#5a5a5a" stroke-width="1"/></svg>
<div class="t" style="left:511px;top:371.6px;color:#1a1a1a;">Edit with Notepad++</div>
<svg style="left:487px;top:372px" width="17" height="17" viewBox="0 0 17 17"><rect x=".8" y=".8" width="12" height="15.4" fill="#fff" stroke="#555" stroke-width="1"/><rect x="2.3" y="5" width="9" height="9.7" fill="url(#gnp)"/><defs><linearGradient id="gnp" x1="0" y1="0" x2="0" y2="1"><stop offset="0" stop-color="#e9f4b0"/><stop offset=".5" stop-color="#8ed42a"/><stop offset="1" stop-color="#1a9a10"/></linearGradient></defs><path d="M7.5 13L14.5 2.5" stroke="#e8a010" stroke-width="2.2"/><circle cx="15.5" cy="1.3" r="1.2" fill="#a01010"/><path d="M3 2.5h6" stroke="#aaa" stroke-width=".8"/></svg>
<div class="t" style="left:511px;top:393.6px;color:#1a1a1a;">Examinar con Microsoft Defender...</div>
<svg style="left:488px;top:396px" width="15" height="17" viewBox="0 0 15 17"><path d="M7.5 0L15 2.5v7.5l-7.5 7L0 10V2.5z" fill="#1a78d8"/><path d="M7.5 0L15 2.5V8H7.5z" fill="#1b6cc8"/><path d="M7.5 0L0 2.5V8h7.5z" fill="#35b2f2"/><path d="M7.5 8H15v2l-7.5 7z" fill="#0d4fa8"/></svg>
<div class="a" style="left:479px;top:416px;width:321px;height:1px;background:#e3e3e3"></div>
<div class="t" style="left:511px;top:422.7px;color:#1a1a1a;">Conceder acceso a</div>
<svg style="left:786px;top:426px" width="5" height="9" viewBox="0 0 5 9"><path d="M.5.5l4 4-4 4" fill="none" stroke="#5a5a5a" stroke-width="1"/></svg>
<div class="t" style="left:511px;top:444.7px;color:#1a1a1a;">Anclar a la barra de tareas</div>
<div class="t" style="left:511px;top:466.7px;color:#1a1a1a;">Copiar como ruta de acceso</div>
<div class="t" style="left:511px;top:488.7px;color:#1a1a1a;">Compartir</div>
<svg style="left:486px;top:489px" width="16" height="14" viewBox="0 0 16 14"><path d="M1 4v9.2h10.5" fill="none" stroke="#1a1a1a" stroke-width="1.2"/><path d="M3.3 9.3C4 5.5 7 4 10 4.3V1.2l5 4.3-5 4.3V7C7.5 6.6 5.3 7.3 3.3 9.3z" fill="none" stroke="#1a1a1a" stroke-width="1.1" stroke-linejoin="round"/></svg>
<div class="t" style="left:511px;top:510.7px;color:#1a1a1a;">Restaurar versiones anteriores</div>
<div class="a" style="left:479px;top:533px;width:321px;height:1px;background:#e3e3e3"></div>
<div class="a" style="left:484px;top:541px;width:311px;height:14px;background:#0077d4;border-radius:4px"></div>
<div class="t" style="left:511px;top:539.7px;color:#fff">Enviar a</div>
<svg style="left:786px;top:543px" width="5" height="9" viewBox="0 0 5 9"><path d="M.5.5l4 4-4 4" fill="none" stroke="#fff" stroke-width="1"/></svg>
<div class="a" style="left:479px;top:562px;width:321px;height:1px;background:#e3e3e3"></div>
<div class="t" style="left:511px;top:568.7px;color:#1a1a1a;">Cortar</div>
<div class="t" style="left:511px;top:590.5px;color:#1a1a1a;">Copiar</div>
<div class="a" style="left:479px;top:613px;width:321px;height:1px;background:#e3e3e3"></div>
<div class="t" style="left:511px;top:619.7px;color:#1a1a1a;">Crear acceso directo</div>
<div class="t" style="left:511px;top:641.7px;color:#1a1a1a;">Eliminar</div>
<div class="t" style="left:511px;top:663.5px;color:#1a1a1a;">Cambiar nombre</div>
<div class="a" style="left:479px;top:686px;width:321px;height:1px;background:#e3e3e3"></div>
<div class="t" style="left:511px;top:693.7px;color:#1a1a1a;">Propiedades</div>
<!-- ===== SUBMENU ===== -->
<div class="a" style="left:798px;top:534px;width:277px;height:164px;background:#f9f9f9;border:1px solid #e2e2e2;border-radius:8px;box-shadow:0 4px 10px rgba(0,0,0,.10)"></div>
<div class="t" style="left:832px;top:541.8px;color:#1a1a1a">Carpeta comprimida (en zip)</div>
<svg style="left:808px;top:543px" width="16" height="14" viewBox="0 0 16 14"><path d="M0 1.2C0 .5.5 0 1.2 0h4.3l1.6 1.6h7.7c.7 0 1.2.5 1.2 1.2v9.9c0 .7-.5 1.2-1.2 1.2H1.2C.5 13.9 0 13.4 0 12.7z" fill="#e8a80c"/><path d="M0 4h16v8.7c0 .7-.5 1.2-1.2 1.2H1.2C.5 13.9 0 13.4 0 12.7z" fill="#fcd462"/><path d="M0 8.5h16" stroke="#9a8a60" stroke-width="1.5" stroke-dasharray="1 1"/><rect x="2" y="9" width="2.5" height="4" fill="#777"/></svg>
<div class="t" style="left:832px;top:563.7px;color:#1a1a1a">Destinatario de correo</div>
<svg style="left:808px;top:567px" width="16" height="12" viewBox="0 0 16 12"><rect x=".5" y=".5" width="15" height="11" fill="#fff" stroke="#999"/><path d="M3 3h4M5 6h7M5 8.5h7" stroke="#888" stroke-width=".9"/><rect x="11.5" y="2" width="2" height="2" fill="#2a8ae0"/></svg>
<div class="t" style="left:832px;top:585.6px;color:#1a1a1a">Destinatario de fax</div>
<svg style="left:808px;top:585px" width="16" height="16" viewBox="0 0 16 16"><rect x="4" y=".5" width="8" height="4" fill="#fff" stroke="#888" stroke-width=".8"/><rect x=".5" y="4" width="15" height="9" rx="1.5" fill="#c8ccd0" stroke="#555" stroke-width=".8"/><rect x="6" y="5.5" width="4" height="3" fill="#2a8ae0"/><circle cx="12.5" cy="8.5" r="1.5" fill="none" stroke="#444" stroke-width=".8"/><path d="M2 6.5h2M2 8.5h2M2 10.5h2" stroke="#555" stroke-width=".8"/><rect x="3.5" y="11.5" width="9" height="4" fill="#fff" stroke="#444" stroke-width=".8"/><circle cx="13" cy="5" r=".7" fill="#2c2"/></svg>
<div class="t" style="left:832px;top:607.6px;color:#1a1a1a">Destinatario de fax</div>
<svg style="left:808px;top:607px" width="16" height="16" viewBox="0 0 16 16"><rect x="4" y=".5" width="8" height="4" fill="#fff" stroke="#888" stroke-width=".8"/><rect x=".5" y="4" width="15" height="9" rx="1.5" fill="#c8ccd0" stroke="#555" stroke-width=".8"/><rect x="6" y="5.5" width="4" height="3" fill="#2a8ae0"/><circle cx="12.5" cy="8.5" r="1.5" fill="none" stroke="#444" stroke-width=".8"/><path d="M2 6.5h2M2 8.5h2M2 10.5h2" stroke="#555" stroke-width=".8"/><rect x="3.5" y="11.5" width="9" height="4" fill="#fff" stroke="#444" stroke-width=".8"/><circle cx="13" cy="5" r=".7" fill="#2c2"/></svg>
<div class="t" style="left:832px;top:629.8px;color:#1a1a1a">Dispositivo Bluetooth</div>
<svg style="left:810px;top:630px" width="12" height="16" viewBox="0 0 12 16"><ellipse cx="6" cy="8" rx="6" ry="8" fill="#0a82f0"/><path d="M3.2 5l5.3 5-2.5 2.5V3.5L8.5 6 3.2 11" fill="none" stroke="#fff" stroke-width="1.1"/></svg>
<div class="t" style="left:832px;top:651.5px;color:#1a1a1a">Documentos</div>
<svg style="left:810px;top:652px" width="13" height="17" viewBox="0 0 13 17"><defs><linearGradient id="gd2" x1="0" y1="0" x2="0" y2="1"><stop offset="0" stop-color="#b8cbe2"/><stop offset="1" stop-color="#7d96b8"/></linearGradient></defs><rect width="12.5" height="15.5" rx="1.5" fill="url(#gd2)"/><path d="M2.5 3.5h4M2.5 6h4M2.5 8.5h8M2.5 11h8" stroke="#fff" stroke-width="1.1"/><rect x="7.5" y="2.8" width="3" height="3.5" fill="#fff"/><rect x="-1.5" y="15.8" width="15" height="1.5" rx=".7" fill="#1a88d8"/></svg>
<div class="a" style="left:805px;top:675px;width:262px;height:14px;background:#0077d4;border-radius:4px"></div>
<svg style="left:808px;top:674px" width="16" height="16" viewBox="0 0 16 16"><defs><linearGradient id="gdk" x1="0" y1="0" x2="1" y2="1"><stop offset="0" stop-color="#3cc8d8"/><stop offset="1" stop-color="#0a70b8"/></linearGradient></defs><rect x="0" y="1" width="16" height="13" rx="1.5" fill="url(#gdk)"/><path d="M11 15h1.5M13.5 15H15" stroke="#cde" stroke-width="1"/></svg>
<div class="t" style="left:832px;top:673.5px;color:#fff">Escritorio (crear acceso directo)</div>
<!-- ===== ANNOTATIONS ===== -->
<div class="a" style="left:176px;top:414px;width:205px;height:29px;border:4px solid #ff2a6a;border-radius:8px;box-shadow:0 1px 4px rgba(0,0,0,.35),inset 1px 2px 5px rgba(0,0,0,.35)"></div>
<div class="a" style="left:476px;top:527px;width:135px;height:38px;border:4.5px solid #ff2a6a;border-radius:9px;box-shadow:0 1px 4px rgba(0,0,0,.35),inset 1px 2px 6px rgba(0,0,0,.35)"></div>
<div class="a" style="left:798px;top:668px;width:236px;height:28px;border:1px dashed #444"></div><div class="a" style="left:915px;top:652px;width:0;height:16px;border-left:1px dashed #555"></div>
<div class="a" style="left:799px;top:668px;width:235px;height:27px;border:4px solid #ff2a6a;border-radius:8px;box-shadow:0 1px 4px rgba(0,0,0,.35),inset 1px 2px 5px rgba(0,0,0,.35)"></div>
</body></html>
